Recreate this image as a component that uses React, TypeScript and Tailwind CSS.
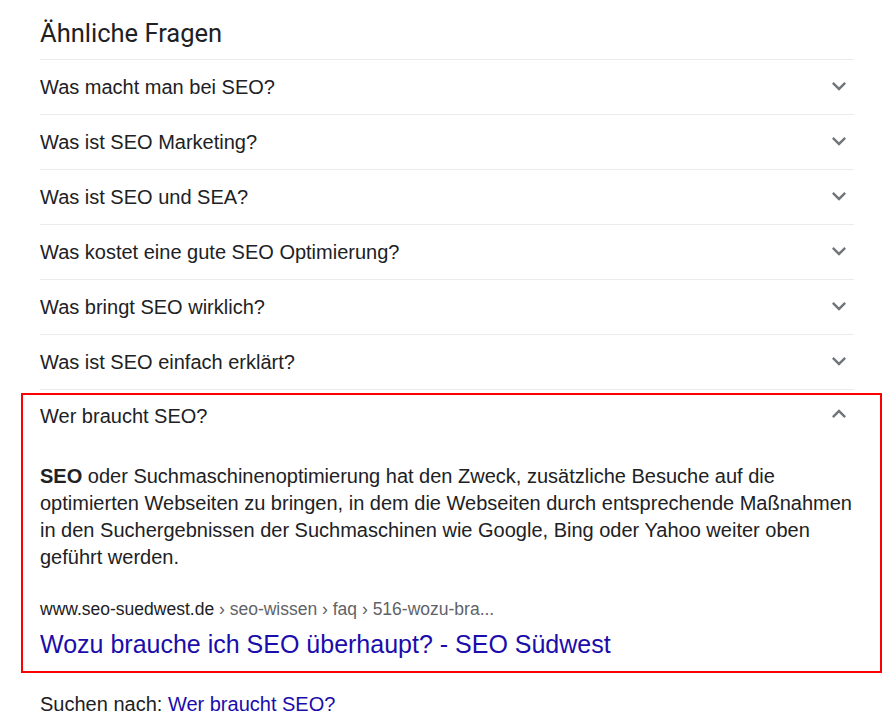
const questions = [
  "Was macht man bei SEO?",
  "Was ist SEO Marketing?",
  "Was ist SEO und SEA?",
  "Was kostet eine gute SEO Optimierung?",
  "Was bringt SEO wirklich?",
  "Was ist SEO einfach erklärt?",
];

function Chevron({ up = false }: { up?: boolean }) {
  return (
    <svg
      viewBox="0 0 24 24"
      className={`w-[28px] h-[28px] fill-[#70757a] ${up ? "rotate-180" : ""}`}
    >
      <path d="M16.59 8.59L12 13.17 7.41 8.59 6 10l6 6 6-6z" />
    </svg>
  );
}

export default function App() {
  return (
    <div className="min-h-screen bg-white font-['Liberation_Sans',Arial,sans-serif] text-[#202124]">
      <div className="pl-[40px] w-[854px]">
        {/* Heading */}
        <div className="h-[60px] border-b border-[#ebebeb] flex items-center pt-[6px]">
          <h2 className="font-['Roboto',sans-serif] text-[25.5px] leading-[32px] text-[#202124]">
            Ähnliche Fragen
          </h2>
        </div>

        {/* Collapsed questions */}
        {questions.map((q) => (
          <div
            key={q}
            className="h-[55px] border-b border-[#ebebeb] flex items-center justify-between"
          >
            <span className="text-[20px] leading-[27px]">{q}</span>
            <div className="mr-[1px] mt-[-2px]">
              <Chevron />
            </div>
          </div>
        ))}

        {/* Expanded question, highlighted */}
        <div className="mt-[3px] ml-[-19px] w-[861px] border-2 border-[#ff0000] pl-[17px] pr-[26px] pb-[11px]">
          <div className="h-[42px] flex items-center justify-between">
            <span className="text-[20px] leading-[27px]">Wer braucht SEO?</span>
            <div className="mr-[1px] mt-[-4px]">
              <Chevron up />
            </div>
          </div>

          <p className="mt-[26px] text-[20px] leading-[27px] text-[#202124]">
            <b>SEO</b> oder Suchmaschinenoptimierung hat den Zweck, zusätzliche Besuche auf die
            optimierten Webseiten zu bringen, in dem die Webseiten durch entsprechende Maßnahmen
            in den Suchergebnissen der Suchmaschinen wie Google, Bing oder Yahoo weiter oben
            geführt werden.
          </p>

          <div className="mt-[26px] text-[17.5px] leading-[25px]">
            <span className="text-[#202124]">www.seo-suedwest.de</span>
            <span className="text-[#5f6368]"> › seo-wissen › faq › 516-wozu-bra...</span>
          </div>
          <a className="block mt-[6px] text-[25px] leading-[32px] text-[#1a0dab] cursor-pointer">
            Wozu brauche ich SEO überhaupt? - SEO Südwest
          </a>
        </div>

        {/* Search for */}
        <div className="mt-[18px] text-[20px] leading-[27px]">
          <span>Suchen nach: </span>
          <a className="text-[#1a0dab] cursor-pointer">Wer braucht SEO?</a>
        </div>
      </div>
    </div>
  );
}
